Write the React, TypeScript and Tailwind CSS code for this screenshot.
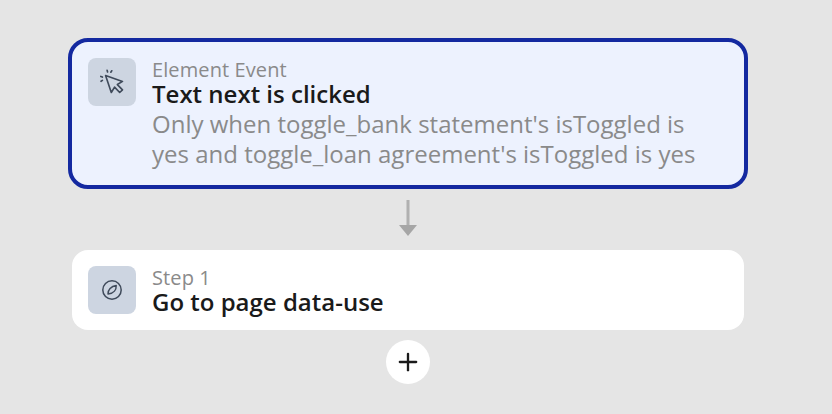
import { Plus } from "lucide-react";

function ClickIcon() {
  return (
    <svg viewBox="0 0 24 24" className="h-7 w-7" fill="none" stroke="#3f4a5a" strokeWidth="1.4" strokeLinecap="round" strokeLinejoin="round">
      <path d="M6.5 6.5 L21 11.5 L16.6 14.2 L21 18.8 L18.6 21 L14.2 16.4 L11.4 21 Z" />
      <path d="M7.8 2 L8.2 3.4" />
      <path d="M11.8 2.4 L11 3.6" />
      <path d="M2.4 7.2 L3.8 7.8" />
      <path d="M2.6 11.4 L3.8 10.6" />
    </svg>
  );
}

function CompassIcon() {
  return (
    <svg viewBox="0 0 24 24" className="h-6 w-6" fill="none" stroke="#3f4a5a" strokeWidth="1.5" strokeLinecap="round" strokeLinejoin="round">
      <circle cx="12" cy="12" r="9.2" />
      <path d="M16.2 7.6 C16.4 11.5 14 15.4 8 16 C7.8 12 11 8.2 16.2 7.6 Z" />
    </svg>
  );
}

function ArrowDown() {
  return (
    <svg viewBox="0 0 20 36" className="h-9 w-5">
      <rect x="8.5" y="0" width="3" height="28" fill="#b0b0b0" />
      <path d="M1 25 H19 L10 36 Z" fill="#a6a6a6" />
    </svg>
  );
}

export default function App() {
  return (
    <div className="h-[414px] w-[832px] overflow-hidden bg-[#e5e5e5]">
      <div
        className="flex w-[816px] flex-col items-center pt-[38px]"
        style={{ fontFamily: '"Open Sans", sans-serif' }}
      >
        <div className="flex h-[151px] w-[680px] gap-4 rounded-[20px] border-4 border-[#1429a0] bg-[#edf2fe] p-4">
          <div className="flex h-12 w-12 shrink-0 items-center justify-center rounded-lg bg-[#cdd5e1]">
            <ClickIcon />
          </div>
          <div className="min-w-0">
            <p className="text-[20px] leading-6 font-medium tracking-[0.1px] text-[#8a8a8a]">Element Event</p>
            <p className="text-[24px] leading-6 font-semibold text-[#1a1a1a]">Text next is clicked</p>
            <p className="mt-[3px] text-[24px] leading-[30px] text-[#8a8a8a]">
              Only when toggle_bank statement's isToggled is
              <br />
              yes and toggle_loan agreement's isToggled is yes
            </p>
          </div>
        </div>

        <div className="mt-[11px] flex h-[36px] items-start">
          <ArrowDown />
        </div>

        <div className="mt-[14px] flex h-20 w-[672px] gap-4 rounded-2xl bg-white p-4">
          <div className="flex h-12 w-12 shrink-0 items-center justify-center rounded-lg bg-[#cdd5e1]">
            <CompassIcon />
          </div>
          <div>
            <p className="text-[20px] leading-6 font-medium tracking-[0.1px] text-[#8a8a8a]">Step 1</p>
            <p className="text-[24px] leading-6 font-semibold text-[#1a1a1a]">Go to page data-use</p>
          </div>
        </div>

        <div className="mt-2.5 flex h-11 w-11 items-center justify-center rounded-full bg-white">
          <Plus className="h-7 w-7 text-[#1a1a1a]" strokeWidth={2} />
        </div>
      </div>
    </div>
  );
}
